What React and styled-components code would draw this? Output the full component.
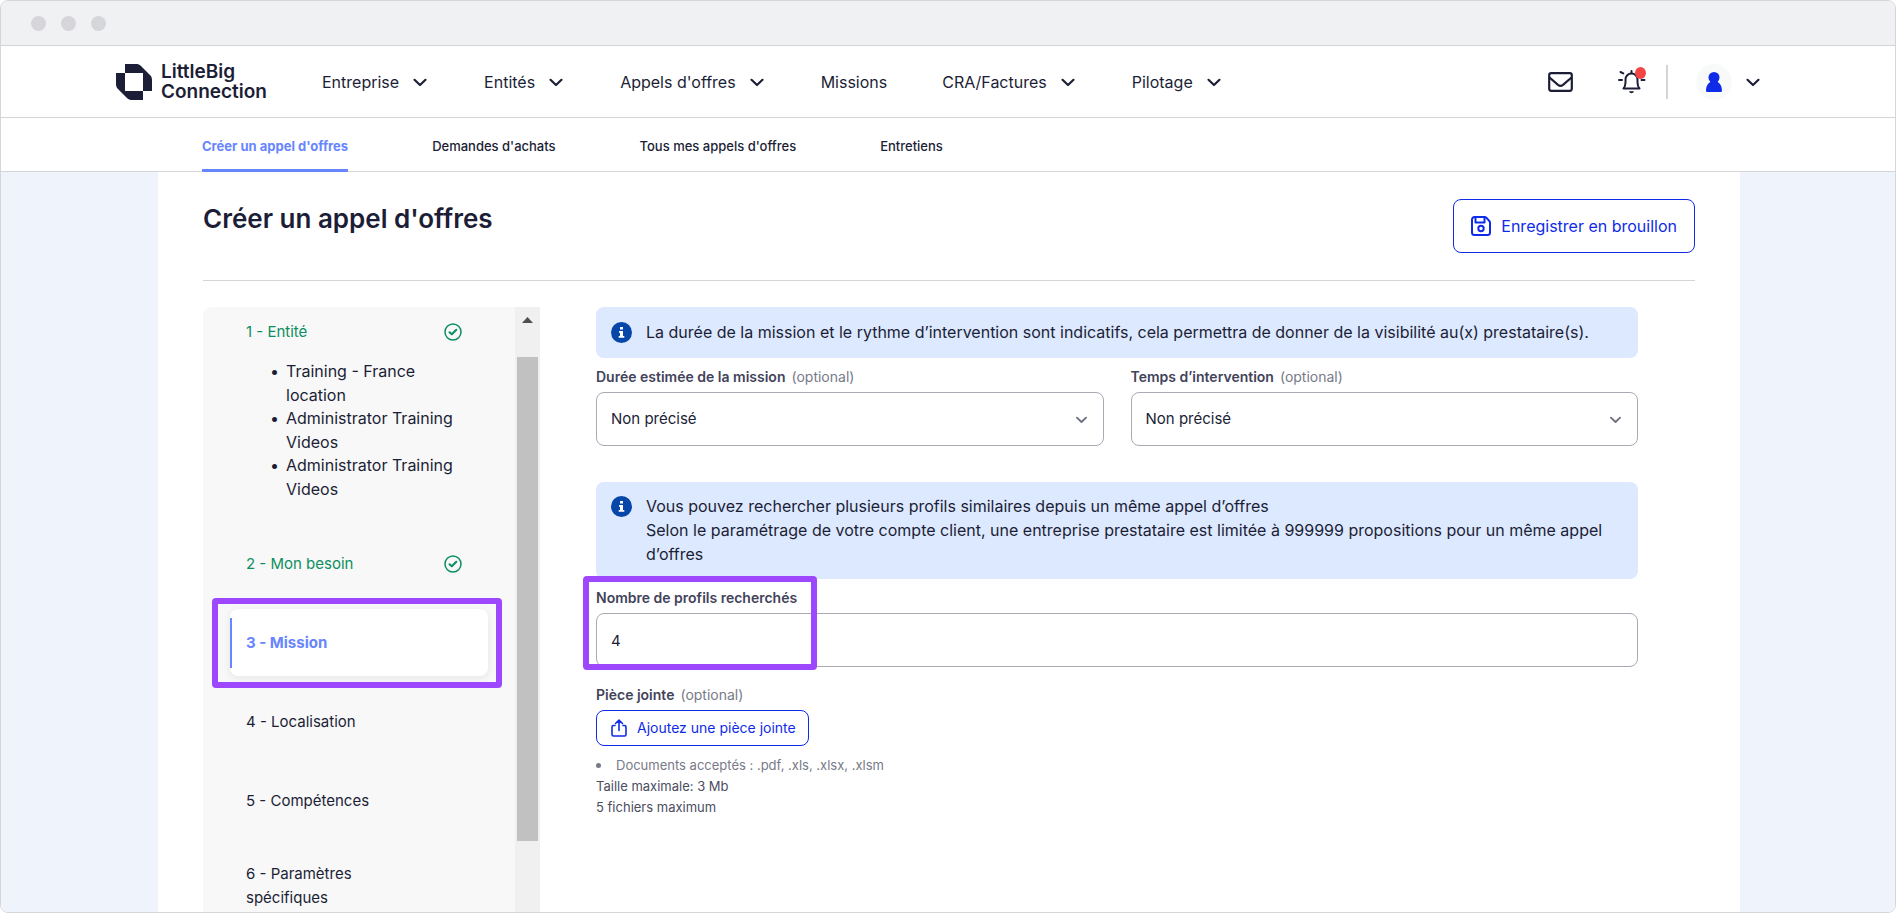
import React from 'react';
import styled, { createGlobalStyle, css } from 'styled-components';

const GlobalStyle = createGlobalStyle`
  * {
    box-sizing: border-box;
  }

  body {
    margin: 0;
    background: #ffffff;
    color: #1b1e36;
    font-family: Inter, 'Liberation Sans', sans-serif;
    font-size: 16px;
    line-height: 24px;
  }

  button, input, select {
    font: inherit;
    color: inherit;
  }
`;

const Window = styled.div`
  display: flex;
  flex-direction: column;
  height: 100vh;
  overflow: hidden;
  border: 1px solid #d5d5da;
  border-radius: 8px;
`;

const TitleBar = styled.div`
  display: flex;
  flex: none;
  align-items: center;
  gap: 15px;
  height: 45px;
  padding: 0 30px;
  background: #f0f1f3;
  border-bottom: 1px solid #d5d5d9;
`;

const Dot = styled.span`
  width: 15px;
  height: 15px;
  border-radius: 50%;
  background: #d6d5da;
`;

const Header = styled.header`
  display: flex;
  flex: none;
  align-items: center;
  height: 72px;
  padding: 0 133px 0 115px;
  border-bottom: 1px solid #d5d5d9;
`;

const Brand = styled.a`
  display: flex;
  align-items: center;
  gap: 9px;
  width: 206px;
  color: #1b1e36;
  font-size: 19px;
  font-weight: 600;
  text-decoration: none;
`;

const BrandName = styled.span`
  display: grid;
  grid-auto-rows: 20px;
  line-height: 20px;
`;

const MainNav = styled.nav`
  display: flex;
  flex: 1;
  align-items: center;
  gap: 55px;
`;

const NavLink = styled.a`
  display: flex;
  align-items: center;
  gap: 12px;
  color: #1b1e36;
  text-decoration: none;
  white-space: nowrap;
`;

const Tools = styled.div`
  display: flex;
  align-items: center;
`;

const IconButton = styled.button`
  position: relative;
  display: flex;
  align-items: center;
  margin: 0 45px 0 0;
  padding: 0;
  border: 0;
  background: none;
`;

const Alert = styled.span`
  position: absolute;
  top: -3px;
  right: 0;
  width: 11px;
  height: 12px;
  border-radius: 50%;
  background: #f44545;
`;

const Separator = styled.span`
  width: 2px;
  height: 34px;
  margin: 0 28px 0 -25px;
  background: #d3d4da;
`;

const Account = styled.button`
  display: flex;
  align-items: center;
  gap: 12px;
  padding: 0;
  border: 0;
  background: none;
`;

const Avatar = styled.span`
  display: flex;
  align-items: center;
  justify-content: center;
  width: 36px;
  height: 36px;
  border-radius: 50%;
  background: #f8faf9;
`;

const SubNav = styled.nav`
  display: flex;
  flex: none;
  gap: 84px;
  height: 54px;
  padding: 0 201px;
  border-bottom: 1px solid #d5d5d9;
`;

const SubLink = styled.a`
  height: 54px;
  color: #1b1e36;
  font-size: 13px;
  font-weight: 500;
  line-height: 56px;
  text-decoration: none;
  white-space: nowrap;

  ${({ $active }) => $active && css`
    color: #6785ff;
    font-weight: 700;
    border-bottom: 3px solid #6785ff;
    border-radius: 1px;
  `}
`;

const Body = styled.div`
  display: flex;
  flex: 1;
  min-height: 0;
  padding: 0 155px 0 157px;
  background: #eff3fc;
`;

const Page = styled.main`
  display: flex;
  flex: 1;
  flex-direction: column;
  min-width: 0;
  padding: 27px 45px 0;
  background: #ffffff;
`;

const PageHead = styled.div`
  display: flex;
  flex: none;
  align-items: flex-start;
  justify-content: space-between;
  height: 82px;
  border-bottom: 1px solid #d5d5d9;
`;

const Title = styled.h1`
  margin: 0;
  font-size: 26px;
  font-weight: 600;
  line-height: 40px;
`;

const OutlineButton = styled.button`
  display: flex;
  align-items: center;
  gap: 10px;
  height: ${({ $small }) => ($small ? '36px' : '54px')};
  padding: ${({ $small }) => ($small ? '0 12px 0 14px' : '0 17px')};
  border: 1px solid #0f2be8;
  border-radius: 8px;
  background: #ffffff;
  color: #0f2be8;
  font-size: ${({ $small }) => ($small ? '14px' : '16px')};
  white-space: nowrap;
`;

const Columns = styled.div`
  display: flex;
  flex: 1;
  min-height: 0;
  margin-top: 26px;
`;

const Sidebar = styled.aside`
  display: flex;
  flex: none;
  width: 337px;
  overflow: hidden;
  border-radius: 8px 0 0 0;
  background: #f8f8f8;
`;

const Steps = styled.ol`
  flex: 1;
  margin: 0;
  padding: 0 27px;
  list-style: none;
`;

const Step = styled.li`
  position: relative;
  margin-bottom: 12px;
`;

const StepLink = styled.a`
  display: flex;
  align-items: center;
  justify-content: space-between;
  min-height: ${({ $first }) => ($first ? '50px' : '67px')};
  padding: ${({ $first }) => ($first ? '0' : '16px')} 26px ${({ $first }) => ($first ? '0' : '16px')} 16px;
  color: ${({ $done }) => ($done ? '#0b8f60' : '#1b1e36')};
  font-size: 15px;
  text-decoration: none;

  ${({ $current }) => $current && css`
    border-radius: 8px;
    background: linear-gradient(#6785ff, #6785ff) 0 50% / 2px 50px no-repeat #ffffff;
    box-shadow: 0 2px 8px rgba(20, 20, 50, 0.08);
    color: #6785ff;
    font-weight: 700;
  `}
`;

const StepLabel = styled.span`
  max-width: 140px;
`;

const Choices = styled.ul`
  display: grid;
  grid-auto-rows: 47px;
  margin: 2px 0 30px;
  padding: 0 20px 0 49px;

  li {
    padding-left: 7px;
  }

  li::marker {
    content: '•';
  }
`;

const Scrollbar = styled.div`
  display: flex;
  flex: none;
  flex-direction: column;
  align-items: center;
  width: 25px;
  background: #f0f0f0;
`;

const ScrollArrow = styled.span`
  height: 50px;
  padding-top: 10px;
  line-height: 0;
`;

const Thumb = styled.span`
  width: 21px;
  height: 80%;
  background: #c1c1c1;
`;

const Form = styled.form`
  flex: 1;
  min-width: 0;
  padding: 0 57px 0 56px;
`;

const Banner = styled.div`
  display: flex;
  gap: 14px;
  padding: ${({ $tall }) => ($tall ? '12px 32px 13px 15px' : '13px 32px 14px 15px')};
  border-radius: 8px;
  background: #dde9fe;

  svg {
    flex: none;
    margin-top: 2px;
  }

  p {
    margin: 0;
  }
`;

const Pair = styled.div`
  display: grid;
  grid-template-columns: 1fr 1fr;
  gap: 27px;
  margin-bottom: 36px;
`;

const Field = styled.div`
  position: relative;
  padding-top: 9px;
`;

const Label = styled.label`
  display: block;
  margin-bottom: 5px;
  color: #42435a;
  font-size: 14px;
  font-weight: 600;
  line-height: 20px;
`;

const Optional = styled.span`
  margin-left: 6px;
  color: #777a88;
  font-weight: 400;
`;

const SelectBox = styled.div`
  display: grid;
  align-items: center;

  > * {
    grid-area: 1 / 1;
  }

  svg {
    justify-self: end;
    margin-right: 15px;
    pointer-events: none;
  }
`;

const controlStyle = css`
  width: 100%;
  height: 54px;
  padding: 0 14px;
  border: 1px solid #a9aab4;
  border-radius: 8px;
  background: #ffffff;
  color: #1b1e36;
  font-size: 15px;
`;

const Select = styled.select`
  ${controlStyle}
  appearance: none;
`;

const Input = styled.input`
  ${controlStyle}
`;

const Highlight = styled.span`
  position: absolute;
  inset: ${({ $inset }) => $inset};
  width: ${({ $width }) => $width || 'auto'};
  border: 6px solid #9d48ff;
  border-radius: 4px;
  pointer-events: none;
`;

const Attachment = styled.div`
  padding-top: 18px;
`;

const Notes = styled.div`
  margin-top: 9px;
  color: #4b4d5f;
  font-size: 13px;
  line-height: 21px;

  ul {
    margin: 0;
    padding: 0;
    color: #777a88;
    list-style: none;
  }

  li {
    display: flex;
    align-items: center;
    gap: 15px;
  }

  li::before {
    content: '';
    width: 5px;
    height: 5px;
    border-radius: 50%;
    background: #777a88;
  }

  p {
    margin: 0;
  }
`;

const Chevron = ({ size = 18, color = '#1b1e36' }) => (
  <svg width={size} height={size} viewBox="0 0 18 18" fill="none" stroke={color} strokeWidth="2.2" strokeLinecap="round" strokeLinejoin="round">
    <path d="M3.500 6.800 9 12l5.500-5.200" />
  </svg>
);

const Logo = () => (
  <svg width="36" height="36" viewBox="0 0 36 36" fill="#1b1e36">
    <path d="M9 0h11c2 0 3.500.6 5 2l9 9c1.400 1.400 2 3 2 5v11h-9V9H9z" />
    <path d="M0 9h9v18h18v9H16c-2 0-3.500-.6-5-2l-9-9c-1.400-1.400-2-3-2-5z" />
  </svg>
);

const Mail = () => (
  <svg width="25" height="20" viewBox="0 0 25 20" fill="none" stroke="#1b1e36" strokeWidth="2.200" strokeLinejoin="round">
    <rect x="1.200" y="1.200" width="22.600" height="17.600" rx="2" />
    <path d="M1.500 5.500 10 12.800c1.600 1.300 3.400 1.300 5 0l8.500-7.300" />
  </svg>
);

const Bell = () => (
  <svg width="28" height="24" viewBox="0 0 28 24" fill="none" stroke="#1b1e36" strokeWidth="2" strokeLinecap="round" strokeLinejoin="round">
    <path d="M5.500 18.500h16c-1.400-1.500-2-3.600-2-6V9.500a6 6 0 0 0-12 0v3c0 2.400-.6 4.500-2 6z" />
    <path d="M13.500 1v2M1 10h3M23.500 10h3M2.500 2l2.800 1.400" />
    <path d="M11 21.300h5c-.4 1.300-1.300 2-2.500 2s-2.100-.7-2.500-2z" fill="#1b1e36" stroke="none" />
  </svg>
);

const Person = () => (
  <svg width="16" height="20" viewBox="0 0 16 20" fill="#0f2be8">
    <circle cx="8" cy="5.500" r="5.500" />
    <path d="M5 9h6c.2 1.200 5 2.500 5 9.500 0 .8-.5 1.500-1.300 1.500H1.300C.5 20 0 19.300 0 18.500 0 11.500 4.800 10.200 5 9z" />
  </svg>
);

const Save = () => (
  <svg width="20" height="20" viewBox="0 0 20 20" fill="none" stroke="#0f2be8" strokeWidth="2" strokeLinejoin="round">
    <path d="M3.500 1h10.300c.6 0 1 .2 1.500.7l3 3.300c.5.500.7 1 .7 1.700v9.800a2.500 2.500 0 0 1-2.500 2.500h-13A2.500 2.500 0 0 1 1 16.500v-13A2.500 2.500 0 0 1 3.500 1z" />
    <path d="M4.500 1v5.500h9V1" />
    <circle cx="10" cy="12.500" r="2.700" />
  </svg>
);

const Upload = () => (
  <svg width="16" height="18" viewBox="0 0 16 18" fill="none" stroke="#0f2be8" strokeWidth="1.600" strokeLinecap="round" strokeLinejoin="round">
    <path d="M4 6.500H2.500c-1 0-1.500.6-1.500 1.500v7.500c0 1 .6 1.500 1.500 1.500h11c1 0 1.500-.6 1.500-1.500V8c0-1-.6-1.500-1.500-1.500H12" />
    <path d="M8 11.500V1.200M4.500 4.500 8 1.200l3.500 3.300" />
  </svg>
);

const Check = () => (
  <svg width="18" height="18" viewBox="0 0 18 18" fill="none" stroke="#0b8f60" strokeLinecap="round" strokeLinejoin="round">
    <circle cx="9" cy="9" r="8" strokeWidth="1.500" />
    <path d="m5.500 9.200 2.300 2.100 4.500-4.500" strokeWidth="2" />
  </svg>
);

const Info = () => (
  <svg width="21" height="21" viewBox="0 0 21 21">
    <circle cx="10.500" cy="10.500" r="10.500" fill="#0546a8" />
    <path d="M9 5h3v2.500H9zM8 9h4v5h1.300v1.700H7.700V14H9v-3.300H8z" fill="#ffffff" />
  </svg>
);

const menu = [
  { name: 'Entreprise', children: true },
  { name: 'Entités', children: true },
  { name: "Appels d'offres", children: true },
  { name: 'Missions' },
  { name: 'CRA/Factures', children: true },
  { name: 'Pilotage', children: true },
];

const tabs = ["Créer un appel d'offres", "Demandes d'achats", "Tous mes appels d'offres", 'Entretiens'];

const steps = [
  {
    name: '1 - Entité',
    done: true,
    choices: ['Training - France location', 'Administrator Training Videos', 'Administrator Training Videos'],
  },
  { name: '2 - Mon besoin', done: true },
  { name: '3 - Mission', current: true },
  { name: '4 - Localisation' },
  { name: '5 - Compétences' },
  { name: '6 - Paramètres spécifiques' },
];

const SelectField = ({ id, label }) => (
  <Field>
    <Label htmlFor={id}>
      {label}
      <Optional>(optional)</Optional>
    </Label>
    <SelectBox>
      <Select id={id}>
        <option>Non précisé</option>
      </Select>
      <Chevron size={15} color="#6c6f7e" />
    </SelectBox>
  </Field>
);

const App = () => (
  <>
    <GlobalStyle />
    <Window>
      <TitleBar>
        <Dot />
        <Dot />
        <Dot />
      </TitleBar>
      <Header>
        <Brand href="#">
          <Logo />
          <BrandName>
            <span>LittleBig</span>
            <span>Connection</span>
          </BrandName>
        </Brand>
        <MainNav>
          {menu.map((item) => (
            <NavLink href="#" key={item.name}>
              {item.name}
              {item.children && <Chevron />}
            </NavLink>
          ))}
        </MainNav>
        <Tools>
          <IconButton type="button" aria-label="Messages">
            <Mail />
          </IconButton>
          <IconButton type="button" aria-label="Notifications">
            <Bell />
            <Alert />
          </IconButton>
          <Separator />
          <Account type="button" aria-label="Mon compte">
            <Avatar>
              <Person />
            </Avatar>
            <Chevron />
          </Account>
        </Tools>
      </Header>
      <SubNav>
        {tabs.map((tab, i) => (
          <SubLink href="#" key={tab} $active={i === 0}>
            {tab}
          </SubLink>
        ))}
      </SubNav>
      <Body>
        <Page>
          <PageHead>
            <Title>Créer un appel d'offres</Title>
            <OutlineButton type="button">
              <Save />
              Enregistrer en brouillon
            </OutlineButton>
          </PageHead>
          <Columns>
            <Sidebar>
              <Steps>
                {steps.map((step, i) => (
                  <Step key={step.name}>
                    <StepLink href="#" $first={i === 0} $done={step.done} $current={step.current}>
                      <StepLabel>{step.name}</StepLabel>
                      {step.done && <Check />}
                    </StepLink>
                    {step.choices && (
                      <Choices>
                        {step.choices.map((choice, n) => (
                          <li key={n}>{choice}</li>
                        ))}
                      </Choices>
                    )}
                    {step.current && <Highlight $inset="-11px -14px -12px -18px" />}
                  </Step>
                ))}
              </Steps>
              <Scrollbar>
                <ScrollArrow>
                  <svg width="11" height="6" viewBox="0 0 11 6">
                    <path d="M0 6 5.500 0 11 6z" fill="#505050" />
                  </svg>
                </ScrollArrow>
                <Thumb />
              </Scrollbar>
            </Sidebar>
            <Form>
              <Banner>
                <Info />
                <p>
                  La durée de la mission et le rythme d’intervention sont indicatifs, cela permettra de donner de la
                  visibilité au(x) prestataire(s).
                </p>
              </Banner>
              <Pair>
                <SelectField id="duration" label="Durée estimée de la mission" />
                <SelectField id="rhythm" label="Temps d’intervention" />
              </Pair>
              <Banner $tall>
                <Info />
                <p>
                  Vous pouvez rechercher plusieurs profils similaires depuis un même appel d’offres
                  <br />
                  Selon le paramétrage de votre compte client, une entreprise prestataire est limitée à 999999
                  propositions pour un même appel d’offres
                </p>
              </Banner>
              <Field>
                <Label htmlFor="profiles">Nombre de profils recherchés</Label>
                <Input id="profiles" type="text" defaultValue="4" />
                <Highlight $inset="-3px auto -3px -13px" $width="234px" />
              </Field>
              <Attachment>
                <Label as="div" id="attachment">
                  Pièce jointe
                  <Optional>(optional)</Optional>
                </Label>
                <OutlineButton type="button" $small aria-describedby="attachment">
                  <Upload />
                  Ajoutez une pièce jointe
                </OutlineButton>
                <Notes>
                  <ul>
                    <li>Documents acceptés : .pdf, .xls, .xlsx, .xlsm</li>
                  </ul>
                  <p>Taille maximale: 3 Mb</p>
                  <p>5 fichiers maximum</p>
                </Notes>
              </Attachment>
            </Form>
          </Columns>
        </Page>
      </Body>
    </Window>
  </>
);

export default App;
